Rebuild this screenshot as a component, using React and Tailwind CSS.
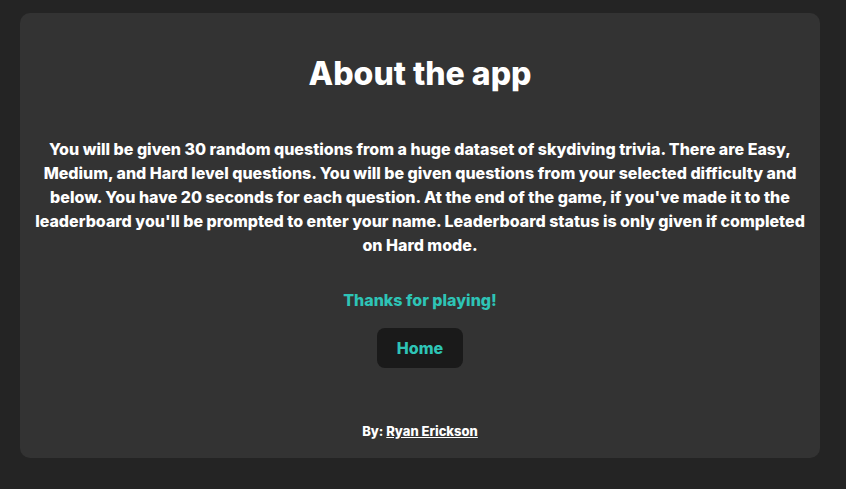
export default function App() {
  return (
    <div className="min-h-screen bg-[#242424] px-5 py-[13px] font-['Inter',sans-serif] text-white">
      <div className="flex w-[800px] flex-col items-center rounded-[10px] bg-[#333333] px-2 pb-[19px] pt-[25px] text-center">
        <h1 className="text-[32px] font-extrabold leading-[72px]">About the app</h1>
        <p className="mt-[27px] text-base font-extrabold leading-6">
          You will be given 30 random questions from a huge dataset of skydiving trivia. There are Easy, Medium, and Hard level
          questions. You will be given questions from your selected difficulty and below. You have 20 seconds for each question.
          At the end of the game, if you've made it to the leaderboard you'll be prompted to enter your name. Leaderboard status is
          only given if completed on Hard mode.
        </p>
        <p className="mt-[31px] text-base font-extrabold leading-6 text-[#2ec4b6]">Thanks for playing!</p>
        <button className="mt-[16px] rounded-lg bg-[#1a1a1a] px-5 py-2 text-base font-extrabold leading-6 text-[#2ec4b6]">Home</button>
        <p className="mt-[55px] text-[13px] font-extrabold leading-4">
          By: <a href="#" className="underline">Ryan Erickson</a>
        </p>
      </div>
    </div>
  );
}
